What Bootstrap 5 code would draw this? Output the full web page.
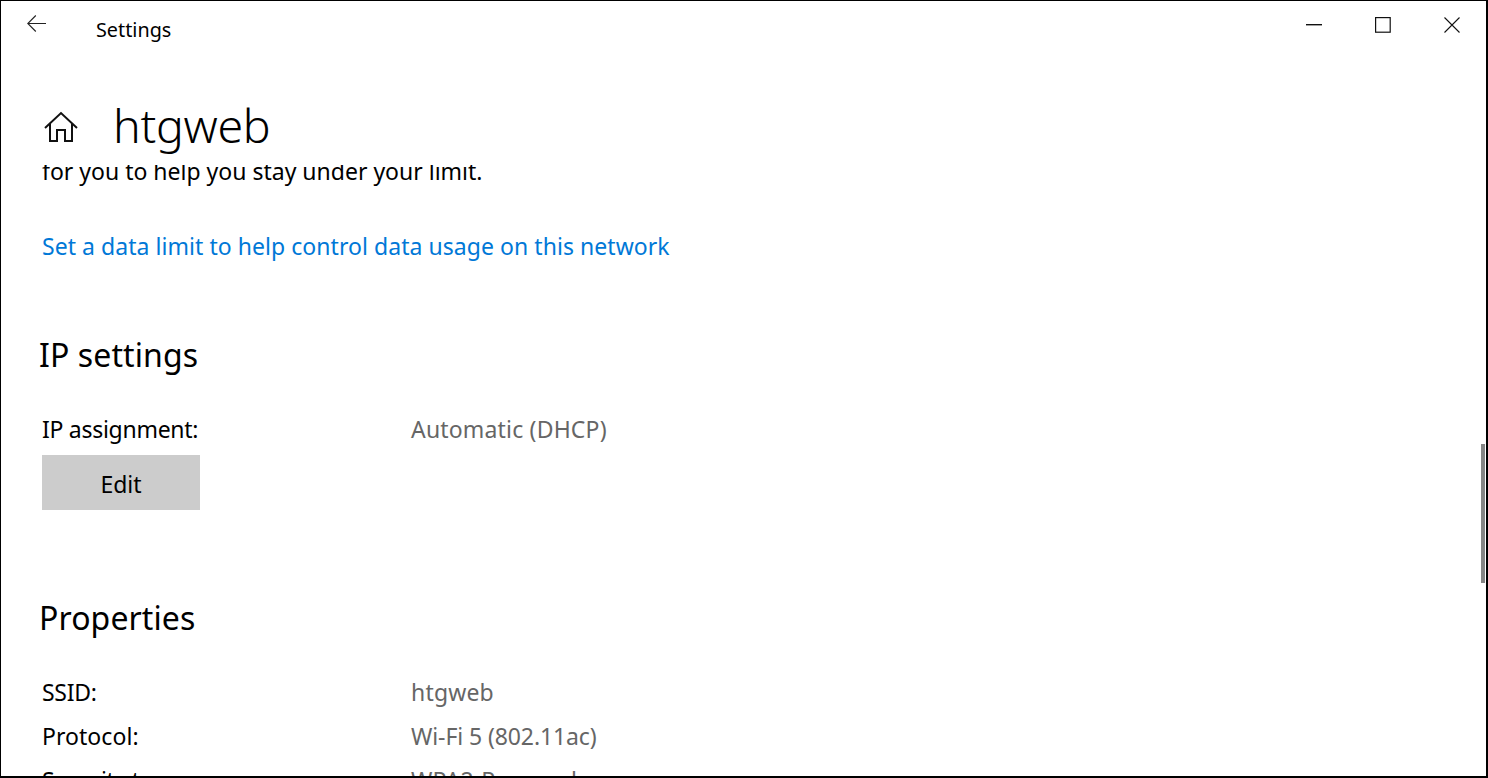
<!DOCTYPE html>
<html lang="en"><head><meta charset="utf-8"><title>Settings</title>
<link href="https://cdn.jsdelivr.net/npm/bootstrap@5.3.0/dist/css/bootstrap.min.css" rel="stylesheet">
<style>
html,body{height:100%;margin:0;overflow:hidden;background:#fff}
body{font-family:"Noto Sans","Open Sans","Liberation Sans",sans-serif;color:#000}
.win{width:1488px;height:778px;border:1px solid #000;border-width:1px 2px 2px 1px;background:#fff;overflow:hidden;position:relative}
.titlebar{height:58px;padding-left:95px}
.back{position:absolute;left:26px;top:14px}
.tt{font-size:19.8px;line-height:58px}
.ctl{width:69px;height:48px;display:flex;align-items:center;justify-content:center}
.hdr{height:106px;padding:30px 0 0 42px;gap:34px}
.hdr h1{font-size:46.5px;font-weight:300;margin:0;line-height:1;letter-spacing:-.3px;padding-bottom:4px}
.hdr-ic{width:36px}
.pane{height:611px;overflow:hidden;padding-left:41px}
.clip{margin-top:-10px;font-size:23px;line-height:32px}
.lnk{color:#0078d7;text-decoration:none;font-size:23px;display:block;margin-top:43px;line-height:32px;letter-spacing:.05px}
h2.sec{font-size:32px;font-weight:400;margin-left:-3px;margin-bottom:0;line-height:44px}
h2.s1{margin-top:71px;letter-spacing:.1px}h2.s2{margin-top:86px;letter-spacing:.1px}
.kv{font-size:23px;line-height:44px;display:flex}
.kv-first{margin-top:30px}
.kv .kk{width:369px;letter-spacing:-.28px}.kv .vv{color:#666;letter-spacing:.18px}
.kv .kk-wide{letter-spacing:.05px}.kv .vv-tight{letter-spacing:-.1px}
.btn.edit{width:158px;height:55px;background:#ccc;border:0;border-radius:0;color:#000;font-size:23px;padding:4px 0 0;display:block;margin-top:4px}
.scroll{position:absolute;right:1px;top:443px;width:4px;height:139px;background:#858585}
</style></head>
<body>
<div class="win">
 <svg class="back" width="19" height="17" viewBox="0 0 19 17" fill="none" stroke="#222" stroke-width="1.1"><path d="M.8 8.500H19M8.800.5.800 8.500l8 8"/></svg>
 <div class="titlebar d-flex justify-content-between">
  <div class="tt">Settings</div>
  <div class="d-flex">
   <div class="ctl"><svg width="16" height="2"><rect width="16" height="1.4" fill="#111"/></svg></div>
   <div class="ctl"><svg width="16" height="16" fill="none" stroke="#111" stroke-width="1.2"><rect x=".6" y=".6" width="14.6" height="14.6"/></svg></div>
   <div class="ctl"><svg width="16" height="16" fill="none" stroke="#111" stroke-width="1.1"><path d="M.5.5l15 15M15.500.5l-15 15"/></svg></div>
  </div>
 </div>
 <div class="hdr d-flex align-items-center">
  <svg class="hdr-ic" width="36" height="32" viewBox="0 0 36 32" fill="none" stroke="#111" stroke-width="2"><path d="M2 17 18 2l16 15M7 13v17h7V19h8v11h7V13"/></svg>
  <h1>htgweb</h1>
 </div>
 <div class="pane">
  <div class="clip">for you to help you stay under your limit.</div>
  <a class="lnk" href="#">Set a data limit to help control data usage on this network</a>
  <h2 class="sec s1">IP settings</h2>
  <div class="kv kv-first"><div class="kk">IP assignment:</div><div class="vv">Automatic (DHCP)</div></div>
  <button class="btn edit">Edit</button>
  <h2 class="sec s2">Properties</h2>
  <div class="kv kv-first"><div class="kk">SSID:</div><div class="vv">htgweb</div></div>
  <div class="kv"><div class="kk kk-wide">Protocol:</div><div class="vv vv-tight">Wi-Fi 5 (802.11ac)</div></div>
  <div class="kv"><div class="kk">Security type:</div><div class="vv">WPA2-Personal</div></div>
 </div>
 <div class="scroll"></div>
</div>
<script src="https://cdn.jsdelivr.net/npm/bootstrap@5.3.0/dist/js/bootstrap.bundle.min.js"></script>
</body></html>
